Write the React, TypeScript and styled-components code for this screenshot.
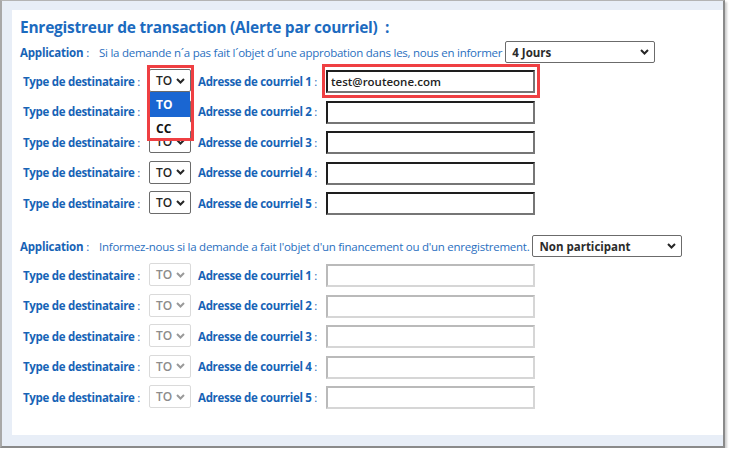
import React from 'react'
import styled, { createGlobalStyle } from 'styled-components'

const GlobalStyle = createGlobalStyle`
  body {
    margin: 0;
    background: #ffffff;
    font-family: 'Open Sans', 'Liberation Sans', sans-serif;
  }
`

const Frame = styled.div`
  box-sizing: border-box;
  width: 725px;
  height: 448px;
  border-top: 1px solid #b4b4b4;
  border-left: 2px solid #a8a8a8;
  border-right: 2px solid #8a8a8a;
  border-bottom: 2px solid #8a8a8a;
  box-shadow: 2px 2px 2px rgba(0, 0, 0, 0.2);
  background: #e8eef7;
  padding: 9px 0 11px 10px;
`

const Panel = styled.div`
  box-sizing: border-box;
  height: 100%;
  background: #ffffff;
  padding: 6px 8px 0;
`

const Title = styled.h1`
  margin: 0 0 3px;
  font-size: 15.5px;
  line-height: 22px;
  letter-spacing: -0.25px;
  font-weight: 700;
  color: #1c6bbf;
`

const Section = styled.div<{ $gap: number }>`
  margin-top: ${({ $gap }) => $gap}px;
`

const AppRow = styled.div`
  display: flex;
  align-items: center;
  height: 22px;
  margin-bottom: 6px;
`

const AppLabel = styled.span`
  font-size: 11.5px;
  letter-spacing: -0.2px;
  font-weight: 700;
  color: #1763b6;
  width: 79px;
  white-space: nowrap;
`

const Colon = styled.span`
  font-weight: 400;
`

const AppText = styled.span`
  font-size: 11.5px;
  letter-spacing: -0.25px;
  color: #2a6fc0;
  white-space: nowrap;
  margin-right: 3px;
`

const Rows = styled.div`
  display: flex;
  flex-direction: column;
  gap: 7.5px;
`

const Row = styled.div`
  display: grid;
  grid-template-columns: 126px 42px 135px 209px;
  align-items: center;
  height: 23px;
  padding-left: 3px;
`

const FieldLabel = styled.span<{ $indent?: number }>`
  font-size: 11.5px;
  letter-spacing: -0.3px;
  font-weight: 700;
  color: #1763b6;
  white-space: nowrap;
  padding-left: ${({ $indent }) => $indent ?? 0}px;
`

const Cell = styled.div`
  position: relative;
  height: 100%;
`

const SelectBox = styled.div<{ $width: number; $disabled?: boolean; $height: number }>`
  box-sizing: border-box;
  display: flex;
  align-items: center;
  justify-content: space-between;
  width: ${({ $width }) => $width}px;
  height: ${({ $height }) => $height}px;
  padding: 0 5px 0 6px;
  border: 1px solid ${({ $disabled }) => ($disabled ? '#dadada' : '#6b6b6b')};
  border-radius: 2px;
  background: #ffffff;
  font-size: 12px;
  font-weight: 600;
  color: ${({ $disabled }) => ($disabled ? '#8c8c8c' : '#262626')};
`

const SelectValue = styled.span`
  font-weight: 700;
  font-size: 11.5px;
  color: #2b2b2b;
`

const Chevron = ({ disabled }: { disabled?: boolean }) => (
  <svg width="9" height="6" viewBox="0 0 9 6">
    <polyline
      points="1,1 4.5,4.5 8,1"
      fill="none"
      stroke={disabled ? '#9a9a9a' : '#262626'}
      strokeWidth="2"
    />
  </svg>
)

const TextInput = styled.input<{ $disabled?: boolean }>`
  box-sizing: border-box;
  width: 209px;
  height: 23px;
  margin: 0;
  padding: 0 3px;
  border: 2px solid;
  border-color: ${({ $disabled }) =>
    $disabled ? '#bababa #d6d6d6 #d6d6d6 #bababa' : '#1e1e1e #767676 #767676 #1e1e1e'};
  background: #ffffff;
  font-family: inherit;
  font-size: 11.5px;
  font-weight: 600;
  color: #222222;
  outline: none;
`

const DropList = styled.div`
  position: absolute;
  top: 23px;
  left: 1px;
  width: 40px;
  background: #ffffff;
  z-index: 2;
`

const DropOption = styled.div<{ $active?: boolean; $height: number }>`
  display: flex;
  align-items: center;
  height: ${({ $height }) => $height}px;
  padding-left: 6px;
  font-size: 12px;
  font-weight: 700;
  background: ${({ $active }) => ($active ? '#1a66d2' : '#ffffff')};
  color: ${({ $active }) => ($active ? '#ffffff' : '#111111')};
`

const Highlight = styled.div<{ $top: number; $left: number; $width: number; $height: number }>`
  position: absolute;
  top: ${({ $top }) => $top}px;
  left: ${({ $left }) => $left}px;
  width: ${({ $width }) => $width}px;
  height: ${({ $height }) => $height}px;
  box-sizing: border-box;
  border: 3.5px solid #ef3f42;
  z-index: 3;
  pointer-events: none;
`

interface RecipientRowProps {
  index: number
  disabled?: boolean
  value?: string
  open?: boolean
}

const RecipientRow: React.FC<RecipientRowProps> = ({ index, disabled, value, open }) => (
  <Row>
    <FieldLabel>
      Type de destinataire <Colon>:</Colon>
    </FieldLabel>
    <Cell>
      <SelectBox $width={42} $height={23} $disabled={disabled}>
        TO
        <Chevron disabled={disabled} />
      </SelectBox>
      {open && (
        <>
          <DropList>
            <DropOption $active $height={25}>TO</DropOption>
            <DropOption $height={22}>CC</DropOption>
          </DropList>
          <Highlight $top={-4} $left={-2} $width={47} $height={76} />
        </>
      )}
    </Cell>
    <FieldLabel $indent={7}>
      Adresse de courriel {index} <Colon>:</Colon>
    </FieldLabel>
    <Cell>
      <TextInput $disabled={disabled} disabled={disabled} defaultValue={value} readOnly />
      {value && <Highlight $top={-5} $left={-4} $width={218} $height={34} />}
    </Cell>
  </Row>
)

interface AlertSectionProps {
  text: string
  option: string
  disabled?: boolean
  gap: number
  first?: boolean
}

const AlertSection: React.FC<AlertSectionProps> = ({ text, option, disabled, gap, first }) => (
  <Section $gap={gap}>
    <AppRow>
      <AppLabel>
        Application <Colon>:</Colon>
      </AppLabel>
      <AppText>{text}</AppText>
      <SelectBox $width={150} $height={22}>
        <SelectValue>{option}</SelectValue>
        <Chevron />
      </SelectBox>
    </AppRow>
    <Rows>
      {[1, 2, 3, 4, 5].map((i) => (
        <RecipientRow
          key={i}
          index={i}
          disabled={disabled}
          value={first && i === 1 ? 'test@routeone.com' : undefined}
          open={first && i === 1}
        />
      ))}
    </Rows>
  </Section>
)

export default function App() {
  return (
    <>
      <GlobalStyle />
      <Frame>
        <Panel>
          <Title>Enregistreur de transaction (Alerte par courriel) &nbsp;:</Title>
          <AlertSection
            first
            gap={0}
            text="Si la demande n´a pas fait l´objet d´une approbation dans les, nous en informer"
            option="4 Jours"
          />
          <AlertSection
            disabled
            gap={21}
            text="Informez-nous si la demande a fait l'objet d'un financement ou d'un enregistrement."
            option="Non participant"
          />
        </Panel>
      </Frame>
    </>
  )
}
